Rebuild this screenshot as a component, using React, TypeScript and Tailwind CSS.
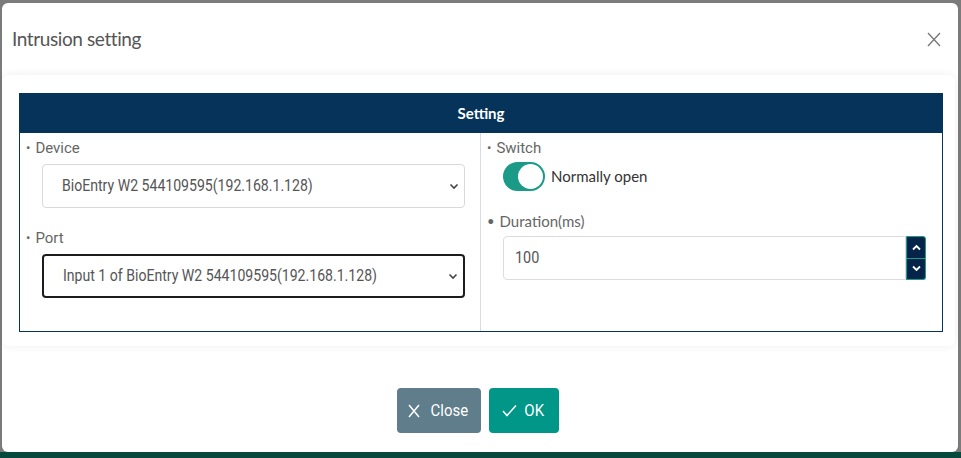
const narrow = { fontFamily: '"Roboto", "Liberation Sans", sans-serif' }

function Chevron() {
  return (
    <svg width="10" height="10" viewBox="0 0 10 10" className="shrink-0">
      <path d="M1.5 3.5 L5 7 L8.5 3.5" fill="none" stroke="#444" strokeWidth="1.6" />
    </svg>
  )
}

function SelectBox({ value, focused }: { value: string; focused?: boolean }) {
  return (
    <div
      className={
        'ml-[16px] mr-[15px] flex h-[44px] items-center justify-between rounded-[4px] bg-white pl-[19px] pr-[5px] ' +
        (focused ? 'border-2 border-[#1c1c1c]' : 'border border-[#d9d9d9]')
      }
    >
      <span className="inline-block origin-left scale-x-[0.88] text-[16px] text-[#555]" style={narrow}>
        {value}
      </span>
      <Chevron />
    </div>
  )
}

function Label({ text, lato }: { text: string; lato?: boolean }) {
  return (
    <div
      className="flex items-center gap-[5px] text-[15px] leading-[20px] text-[#666]"
      style={lato ? { fontFamily: 'Lato, sans-serif' } : narrow}
    >
      <span className="text-[13px]">•</span>
      <span>{text}</span>
    </div>
  )
}

export default function App() {
  return (
    <div className="flex h-[458px] w-[961px] flex-col overflow-hidden bg-[#7b7b7b]">
      <div className="ml-[2px] mr-[3px] mt-[3px] flex h-[449px] flex-col rounded-[6px] bg-white">
        {/* header */}
        <div className="flex h-[72px] shrink-0 items-center justify-between pl-[10px] pr-[17px]">
          <h1 className="text-[19px] tracking-[-0.4px] text-[#555]" style={{ fontFamily: 'Lato, sans-serif' }}>
            Intrusion setting
          </h1>
          <svg width="14" height="15" viewBox="0 0 14 15">
            <path d="M1 1 L13 14 M13 1 L1 14" stroke="#777" strokeWidth="1.3" />
          </svg>
        </div>

        {/* body card */}
        <div className="mr-[3px] shrink-0 rounded-[6px] bg-white pb-[14px] pl-[17px] pr-[12px] pt-[18px] shadow-[0_0_10px_rgba(0,0,0,0.07)]">
          <div className="border border-[#05335a]">
            <div className="flex h-[39px] items-center justify-center bg-[#05335a]">
              <span className="text-[15px] font-bold text-white" style={{ fontFamily: 'Lato, sans-serif' }}>
                Setting
              </span>
            </div>
            <div className="grid h-[198px] grid-cols-[461px_1fr]">
              <div className="border-r border-[#d6dde4] pl-[6px] pt-[5px]">
                <Label text="Device" />
                <div className="mt-[6px]">
                  <SelectBox value="BioEntry W2 544109595(192.168.1.128)" />
                </div>
                <div className="mt-[20px]">
                  <Label text="Port" />
                </div>
                <div className="mt-[6px]">
                  <SelectBox value="Input 1 of BioEntry W2 544109595(192.168.1.128)" focused />
                </div>
              </div>
              <div className="pl-[6px] pt-[5px]">
                <Label text="Switch" />
                <div className="ml-[16px] mt-[4px] flex items-center gap-[6px]">
                  <div className="flex h-[29px] w-[42px] items-center justify-end rounded-full border-2 border-[#1a9a87] bg-[#1a9a87]">
                    <div className="h-[25px] w-[25px] rounded-full bg-white" />
                  </div>
                  <span className="text-[15px] text-[#333]" style={{ fontFamily: 'Lato, sans-serif' }}>
                    Normally open
                  </span>
                </div>
                <div className="mt-[20px]">
                  <Label text="Duration(ms)" lato />
                </div>
                <div className="ml-[16px] mr-[16px] mt-[5px] flex h-[44px]">
                  <div className="flex flex-1 items-center rounded-l-[4px] border border-[#dcdcdc] pl-[11px]">
                    <span className="inline-block origin-left scale-x-[0.9] text-[16px] text-[#555]" style={narrow}>
                      100
                    </span>
                  </div>
                  <div className="flex w-[20px] flex-col">
                    <div className="flex flex-1 items-center justify-center rounded-tr-[3px] border border-[#1a9a87] bg-[#06244a]">
                      <svg width="9" height="7" viewBox="0 0 9 7">
                        <path d="M1 5.5 L4.5 2 L8 5.5" fill="none" stroke="white" strokeWidth="1.8" />
                      </svg>
                    </div>
                    <div className="flex flex-1 items-center justify-center rounded-br-[3px] border border-t-0 border-[#1a9a87] bg-[#06244a]">
                      <svg width="9" height="7" viewBox="0 0 9 7">
                        <path d="M1 1.5 L4.5 5 L8 1.5" fill="none" stroke="white" strokeWidth="1.8" />
                      </svg>
                    </div>
                  </div>
                </div>
              </div>
            </div>
          </div>
        </div>

        {/* footer */}
        <div className="flex flex-1 items-start justify-center gap-[8px] pr-[4px] pt-[42px]">
          <button
            className="flex h-[45px] w-[84px] items-center justify-center gap-[8px] rounded-[4px] bg-[#607d8b] text-[17px] text-white"
            style={narrow}
          >
            <svg width="12" height="14" viewBox="0 0 12 14">
              <path d="M1 1 L11 13 M11 1 L1 13" stroke="white" strokeWidth="1.5" />
            </svg>
            <span className="inline-block scale-x-[0.88]">Close</span>
          </button>
          <button
            className="flex h-[45px] w-[70px] items-center justify-center gap-[6px] rounded-[4px] bg-[#009688] text-[17px] text-white"
            style={narrow}
          >
            <svg width="15" height="13" viewBox="0 0 15 13">
              <path d="M1 7 L5 11.5 L14 1.5" fill="none" stroke="white" strokeWidth="1.5" />
            </svg>
            <span className="inline-block scale-x-[0.88]">OK</span>
          </button>
        </div>
      </div>
      <div className="flex-1 bg-[#064a3e]" />
    </div>
  )
}
